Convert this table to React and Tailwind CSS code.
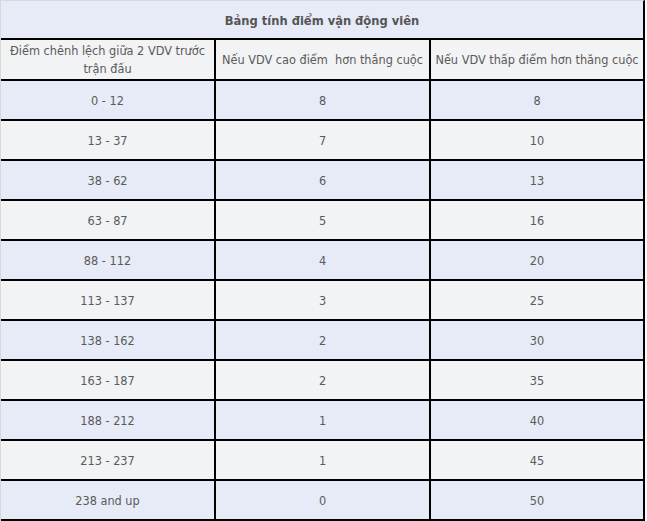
import React from 'react';

const rows = [
  ['0 - 12', '8', '8'],
  ['13 - 37', '7', '10'],
  ['38 - 62', '6', '13'],
  ['63 - 87', '5', '16'],
  ['88 - 112', '4', '20'],
  ['113 - 137', '3', '25'],
  ['138 - 162', '2', '30'],
  ['163 - 187', '2', '35'],
  ['188 - 212', '1', '40'],
  ['213 - 237', '1', '45'],
  ['238 and up', '0', '50'],
];

const Cell = ({ children, className = '' }) => (
  <div className={`flex shrink-0 items-center justify-center text-center ${className}`}>{children}</div>
);

export default function App() {
  return (
    <div className="bg-white w-[647px] h-[521px]" style={{ fontFamily: '"DejaVu Sans Condensed", "DejaVu Sans", Verdana, sans-serif' }}>
      <div className="w-[645px] border-t border-l border-t-[#d8d8d8] border-l-[#d8d8d8] border-r-2 border-r-black text-[#5a5a5a] text-[12.6px]">
        {/* Title */}
        <div className="h-[39px] pt-[3px] bg-[#e7ebf7] border-b-2 border-black flex items-center justify-center font-bold text-[12.8px] text-[#555]">
          Bảng tính điểm vận động viên
        </div>

        {/* Header */}
        <div className="flex h-[41px] bg-[#f2f3f5] border-b-2 border-black leading-[18px]">
          <Cell className="w-[215px] border-r-2 border-black px-1">Điểm chênh lệch giữa 2 VDV trước trận đấu</Cell>
          <Cell className="w-[215px] border-r-2 border-black whitespace-pre">Nếu VDV cao điểm  hơn thắng cuộc</Cell>
          <Cell className="w-[212px] whitespace-nowrap">Nếu VDV thấp điểm hơn thăng cuộc</Cell>
        </div>

        {/* Rows */}
        {rows.map((r, i) => (
          <div
            key={r[0]}
            className={`flex h-[40px] border-b-2 border-black ${i % 2 === 0 ? 'bg-[#e7ebf7]' : 'bg-[#f2f3f5]'}`}
          >
            <Cell className="w-[215px] pt-[2px] border-r-2 border-black">{r[0]}</Cell>
            <Cell className="w-[215px] pt-[2px] border-r-2 border-black">{r[1]}</Cell>
            <Cell className="w-[212px] pt-[2px]">{r[2]}</Cell>
          </div>
        ))}
      </div>
    </div>
  );
}
